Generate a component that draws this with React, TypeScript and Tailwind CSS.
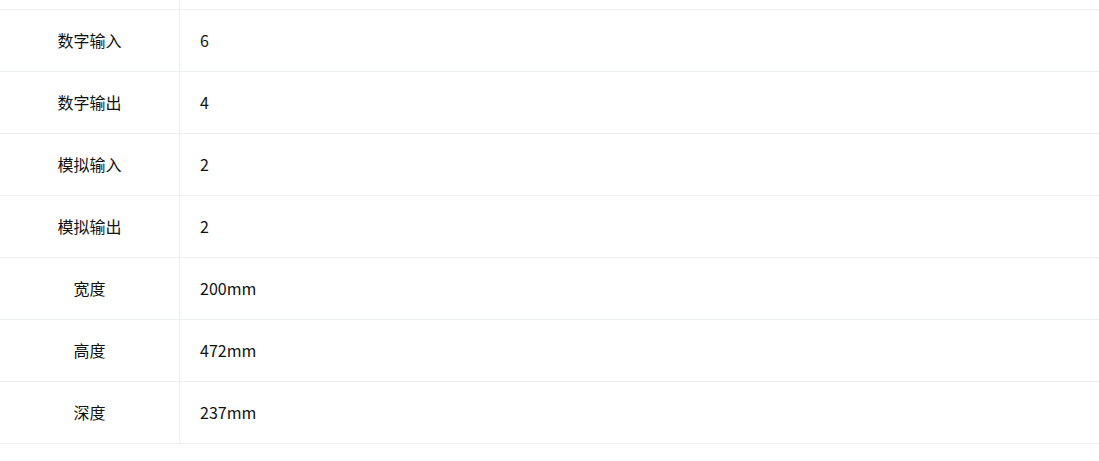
const ROWS = [
  { label: "数字输入", value: "6" },
  { label: "数字输出", value: "4" },
  { label: "模拟输入", value: "2" },
  { label: "模拟输出", value: "2" },
  { label: "宽度", value: "200mm" },
  { label: "高度", value: "472mm" },
  { label: "深度", value: "237mm" },
];

export default function App() {
  return (
    <div
      className="w-[1099px] bg-white text-[#111]"
      style={{ fontFamily: '"Noto Sans CJK SC", "Noto Sans", sans-serif' }}
    >
      <div className="flex h-[10px] border-b border-[#ebeef5]">
        <div className="w-[180px] shrink-0 border-r border-[#ebeef5]" />
        <div className="flex-1" />
      </div>
      {ROWS.map((row) => (
        <div key={row.label} className="flex h-[62px] border-b border-[#ebeef5]">
          <div className="flex w-[180px] shrink-0 items-center justify-center border-r border-[#ebeef5] pb-[2px] text-[16px]">
            {row.label}
          </div>
          <div className="flex flex-1 items-center pb-[2px] pl-[20px] text-[16px]">
            {row.value}
          </div>
        </div>
      ))}
    </div>
  );
}
